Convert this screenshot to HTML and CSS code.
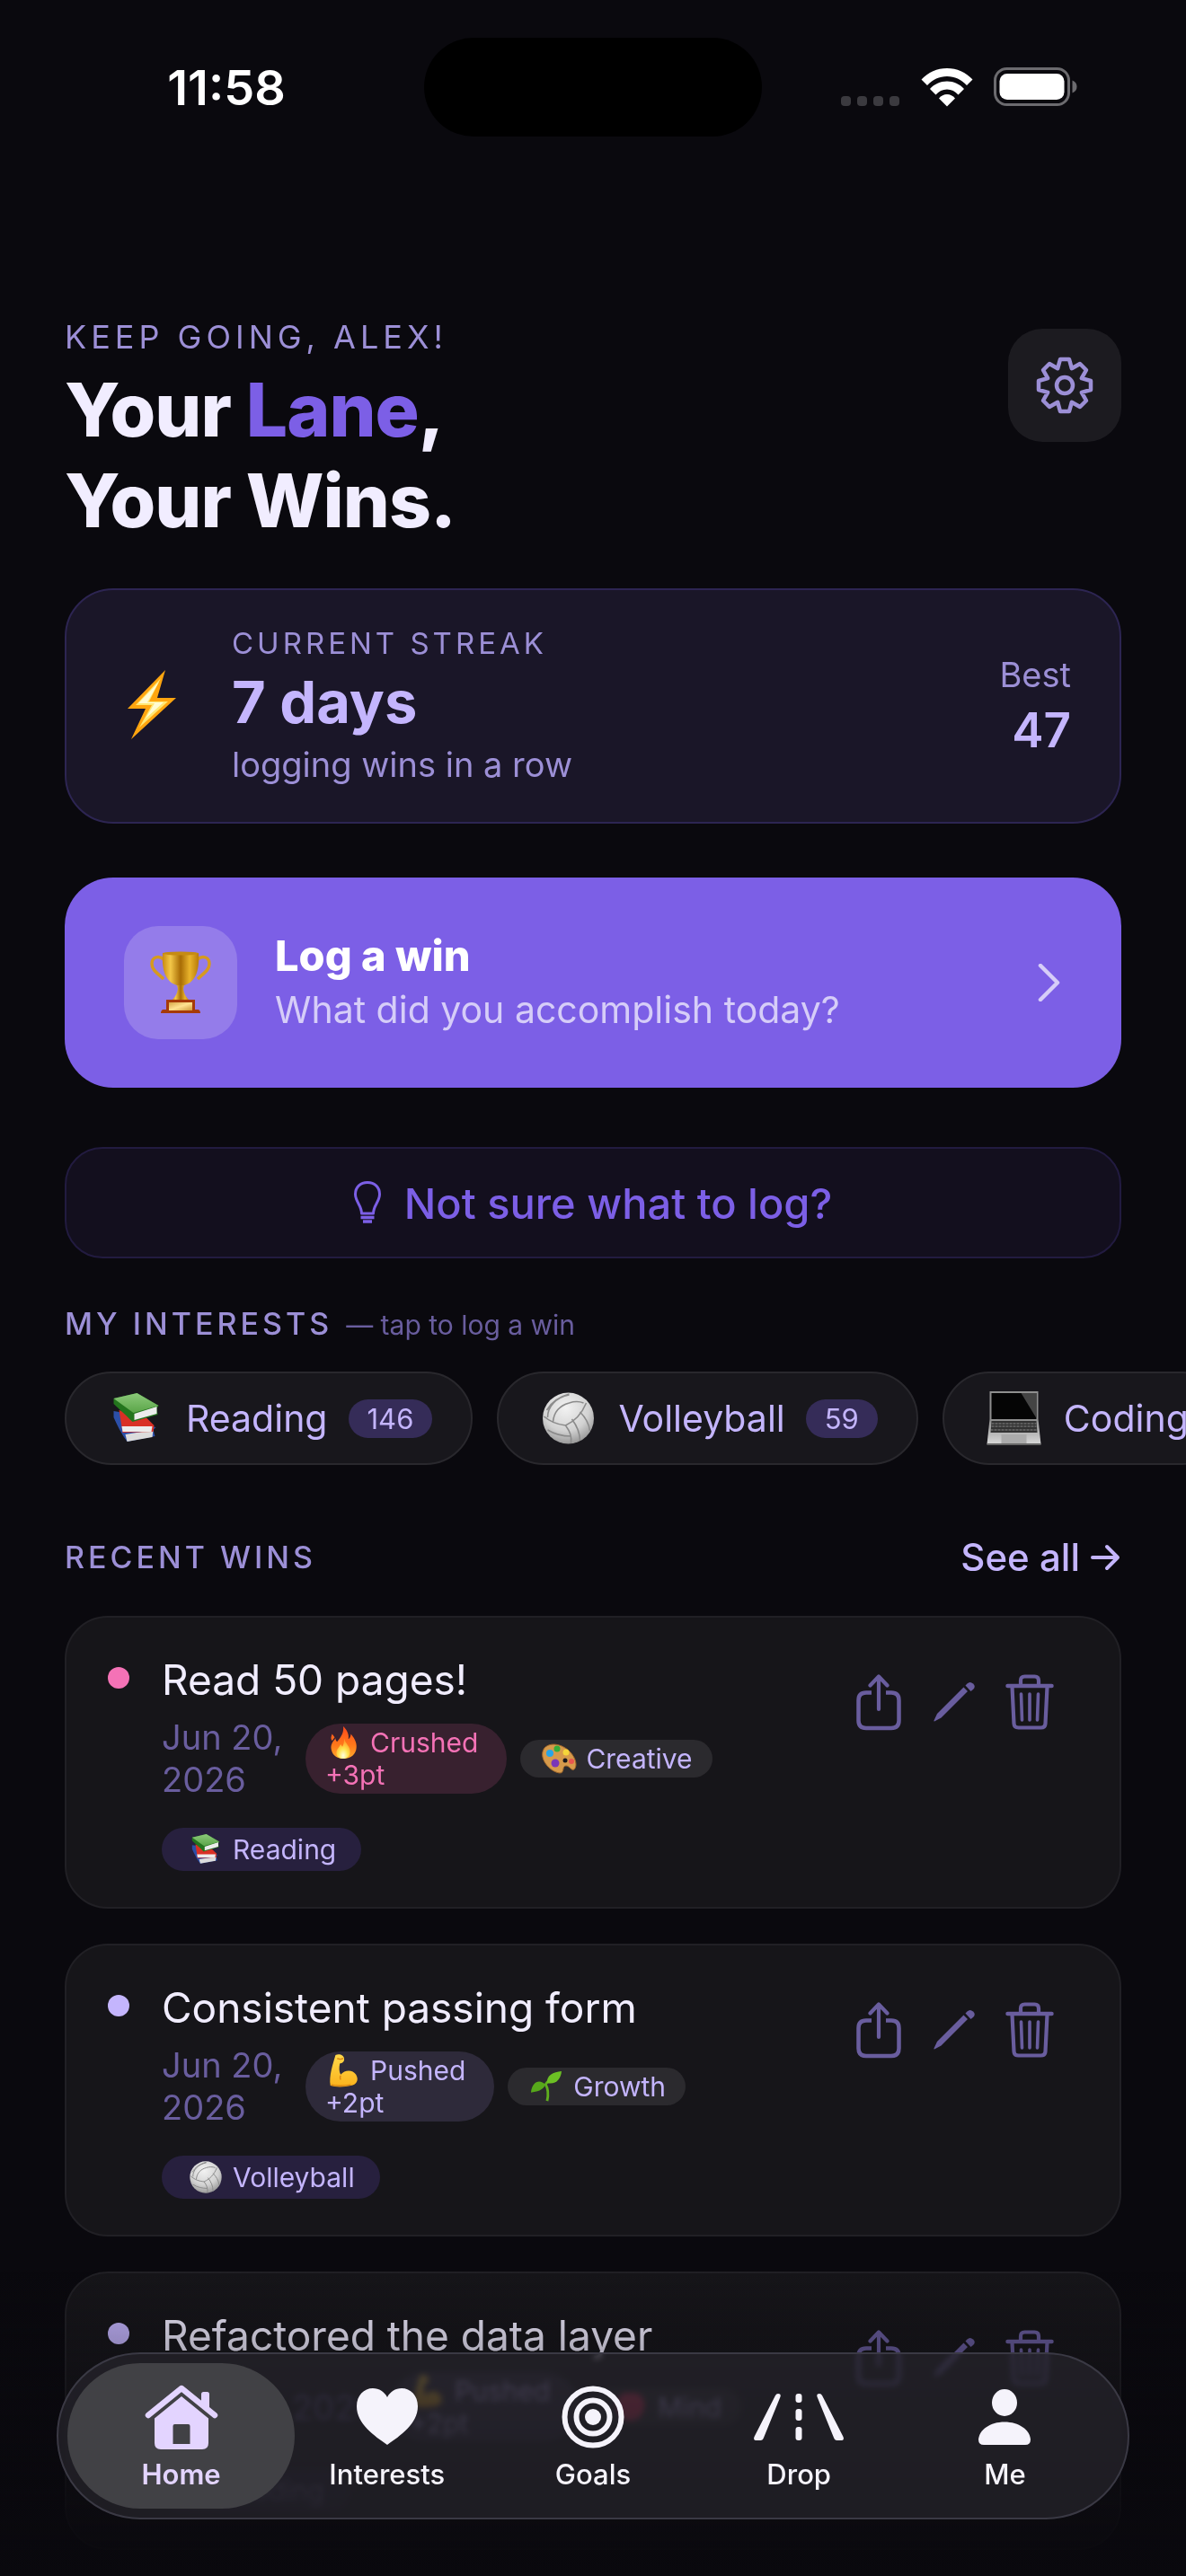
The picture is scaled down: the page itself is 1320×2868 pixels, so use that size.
FILE: index.html
```html
<!DOCTYPE html>
<html lang="en">
<head>
<meta charset="utf-8">
<meta name="viewport" content="width=device-width, initial-scale=1">
<title>Your Lane, Your Wins</title>
<link rel="stylesheet" href="styles.css">
</head>
<body>
<svg class="sprite" aria-hidden="true">
  <defs>
    <linearGradient id="g-gold" x1="0" x2="1" y1="0" y2="0"><stop offset="0" stop-color="#c98a10"/><stop offset=".22" stop-color="#f3c748"/><stop offset=".5" stop-color="#a86c05"/><stop offset=".75" stop-color="#e9b42c"/><stop offset="1" stop-color="#b97b08"/></linearGradient>
    <linearGradient id="g-plate" x1="0" x2="1" y1="0" y2="1"><stop offset="0" stop-color="#d6a648"/><stop offset=".5" stop-color="#ffe391"/><stop offset="1" stop-color="#cf9a3a"/></linearGradient>
    <radialGradient id="g-ball" cx=".45" cy=".3" r=".75"><stop offset="0" stop-color="#f2f2f2"/><stop offset=".6" stop-color="#d2d2d2"/><stop offset="1" stop-color="#8e8e8e"/></radialGradient>
    <linearGradient id="g-green" x1="0" x2="0" y1="0" y2="1"><stop offset="0" stop-color="#8cc97a"/><stop offset="1" stop-color="#5aa548"/></linearGradient>
    <linearGradient id="g-fire" x1="0" x2="0" y1="0" y2="1"><stop offset="0" stop-color="#ff4a1c"/><stop offset=".6" stop-color="#ff7a1a"/><stop offset="1" stop-color="#ffab2e"/></linearGradient>
    <radialGradient id="g-flame" cx=".5" cy=".85" r=".7"><stop offset="0" stop-color="#fffde0"/><stop offset=".5" stop-color="#ffe34d"/><stop offset="1" stop-color="#ff9d2b"/></radialGradient>
    <linearGradient id="g-arm" x1="0" x2="0" y1="0" y2="1"><stop offset="0" stop-color="#ffd94a"/><stop offset="1" stop-color="#fbb21c"/></linearGradient>
    <linearGradient id="g-base" x1="0" x2="0" y1="0" y2="1"><stop offset="0" stop-color="#8c8c8c"/><stop offset="1" stop-color="#d9d9d9"/></linearGradient>
  </defs>
  <symbol id="e-bolt" viewBox="0 0 54 78"><path d="M42 0 0 43h20L4 77 54 31H33Z" fill="#ffa50f"/><path d="M37 9 9 39h18L13 64 45 35H24Z" fill="#ffe873"/><path d="M35 13 12 37h18L20 54 40 36H22Z" fill="#fffbd2"/></symbol>
  <symbol id="e-trophy" viewBox="0 0 68 70"><path d="M15 9C9 4 2 7 2 14c0 7 6 10 13 17M53 9c6-5 13-2 13 5 0 7-6 10-13 17" fill="none" stroke="#d69a1e" stroke-width="3.5"/><path d="M14 2h40c1 17-2 32-16 36h-8C16 34 13 19 14 2Z" fill="url(#g-gold)"/><ellipse cx="34" cy="2.500" rx="20" ry="2" fill="#c68b12"/><path d="M30 38h8l-1 4c1 5 2 8 7 13H24c5-5 6-8 7-13Z" fill="url(#g-gold)"/><path d="M18 54h32v11h3c2 0 3 2 3 4H12c0-2 1-4 3-4h3Z" fill="#a63a08"/><path d="M21 57h26v9H21Z" fill="url(#g-plate)"/></symbol>
  <symbol id="e-books" viewBox="0 0 52 56"><path d="m1 20 6 1 10 10 31 7-3 3 2 7-31 6C10 46 4 34 1 27Z" fill="#2c4fa8"/><path d="m14 46 31-5-1 8-28 5Z" fill="#dcdcdc"/><path d="m7 19 30 8 9 9-1 7-34 1Z" fill="#d93025"/><path d="m10 37 34 0-1 6H11Z" fill="#ececec"/><path d="M1 6 27 0l24 14-2 3 1 7-28 8C13 23 3 14 1 12Z" fill="#23751d"/><path d="m24 23 25-8 0 8-25 7Z" fill="#ececec"/><path d="M1 6 27 0l24 14-28 8Z" fill="url(#g-green)"/></symbol>
  <symbol id="e-ball" viewBox="0 0 58 58"><circle cx="29" cy="29" r="28.500" fill="url(#g-ball)"/><path d="M2 27c8 7 15 9 24 10C37 32 44 24 49 12M5 20C10 11 19 5 30 2M6 28c0-12 9-22 24-25M12 33c1-11 7-18 18-21 6-2 11-2 16 0M26 37c5 7 7 12 6 20M33 30c6 8 9 15 9 24M42 22c6 6 10 13 11 21M6 42c8 5 16 7 26 7" fill="none" stroke="#8b8b8b" stroke-width="1.600"/></symbol>
  <symbol id="e-laptop" viewBox="0 0 60 62"><path d="M3 1h54v31H3Z" fill="#8f8f8f"/><path d="M5 3h50v29H5Z" fill="#050505"/><path d="M38 3h17v28Z" fill="#444"/><path d="M3 32h54l3 28H0Z" fill="url(#g-base)"/><path d="M5 34h50l1 13H4Z" fill="#333"/><path d="M5 37h50M5 40h50M4 44h52" stroke="#888" stroke-dasharray="3 1"/><path d="M16 49h28v10H16Z" fill="#ababab"/><path d="M0 59h60v2H0Z" fill="#666"/></symbol>
  <symbol id="e-fire" viewBox="0 0 38 40"><path d="M19 1c5 5 7 10 6 15 2-1 3-4 3-6 5 6 8 12 6 19-2 7-8 10-15 10S6 35 5 28C4 22 7 19 10 15c0 2 1 4 2 4 4-5 8-10 7-18ZM6 10l3 4-3 4c-2-3-1-5 0-8Z" fill="url(#g-fire)"/><path d="M20 15c1 6 8 10 7 17-1 5-4 7-8 7s-8-2-8-7c0-4 3-6 5-10l2 3c2-3 2-6 2-10Z" fill="url(#g-flame)"/></symbol>
  <symbol id="e-palette" viewBox="0 0 40 34"><path d="M4 5C11-2 24 1 32 9c7 7 9 16 5 20-3 2-5-4-9-4-5 0-1 8-7 8C10 32-4 16 4 5Z" fill="#d69a4b" stroke="#9c642a"/><circle cx="10" cy="11" r="4" fill="#27a5e8"/><circle cx="18" cy="6" r="3.500" fill="#35ad3a"/><circle cx="28" cy="10" r="3.500" fill="#f6d63a"/><circle cx="34" cy="20" r="3" fill="#e8564f"/><circle cx="16" cy="22" r="4.500" fill="#7a36b8"/><circle cx="27" cy="19" r="2.500" fill="#17161a"/></symbol>
  <symbol id="e-arm" viewBox="0 0 38 40"><path d="M10 2c4-2 10 0 10 4 1 4-3 6-5 6-1 5-1 9 1 13 5-6 14-6 18 0 4 7 0 12-6 13-8 2-18 2-24 0C2 27 7 12 10 2Z" fill="url(#g-arm)"/><path d="M12 6c3 1 4 2 7 0M16 26c-1 2-1 3 0 5M5 37c8 2 17 1 23 0" fill="none" stroke="#d98512" stroke-width="1.500"/></symbol>
  <symbol id="e-plant" viewBox="0 0 38 38"><path d="M20 36c2-9 1-15-2-20M18 17c2-4 5-6 9-8" fill="none" stroke="#5fae1e" stroke-width="3"/><path d="M20 15C19 6 27 2 37 1c-1 9-6 16-17 14Z" fill="#6cc024"/><path d="M18 17C11 9 2 14 1 26c7-1 14-2 17-9Z" fill="#57a81b"/></symbol>
  <symbol id="e-brain" viewBox="0 0 40 40"><path d="M20 3c9-2 17 4 17 14S30 37 20 37 3 28 3 17 11 1 20 3Z" fill="#f5305f"/></symbol>
  <symbol id="i-share" viewBox="0 0 50 63"><path d="M17 20.500H11q-8.500 0-8.500 8.500v22.500q0 8.500 8.500 8.500h28q8.500 0 8.500-8.500V29q0-8.500-8.500-8.500h-6" fill="none" stroke="currentColor" stroke-width="4.500"/><path d="M25 39V3M15.500 12.500 25 2.500l9.500 10" fill="none" stroke="currentColor" stroke-width="4.200" stroke-linecap="round" stroke-linejoin="round"/></symbol>
  <symbol id="i-pencil" viewBox="0 0 46 46"><path d="M33.500 6.500 38 11 8.500 40.500 1 44.500Q0 44.500.5 43.500L4 36Z" fill="currentColor"/><path d="m35.500 4.500 2-2q3-3 6.500 0t0 6.500l-2.500 2Z" fill="currentColor"/></symbol>
  <symbol id="i-trash" viewBox="0 0 54 62"><g fill="none" stroke="currentColor" stroke-linecap="round"><path d="M2.500 13h49" stroke-width="4.500"/><path d="M17 12V7q0-4.500 4.500-4.500h11Q37 2.500 37 7v5M7.500 14l2 41q.3 4.500 5 4.500h25q4.700 0 5-4.500l2-41" stroke-width="4.200"/><path d="m17.500 22 1 29M27 22v29M36.500 22l-1 29" stroke-width="3.600"/></g></symbol>
</svg>

<header class="status" aria-label="Status bar">
  <time class="status-time">11:58</time>
  <div class="island"></div>
  <div class="status-icons">
    <svg width="66" height="12" viewBox="0 0 66 12" fill="#3b3a3f"><rect width="11" height="11" rx="4"/><rect x="18" width="11" height="11" rx="4"/><rect x="36" width="11" height="11" rx="4"/><rect x="54" width="11" height="11" rx="4"/></svg>
    <svg class="wifi" width="58" height="43" viewBox="0 0 58 43" fill="#fff"><path d="M29 0c11 0 21 4.500 28.500 12.500L51 19C45 12.500 37.500 9 29 9S13 12.500 7 19L.5 12.500C8 4.500 18 0 29 0Z"/><path d="M29 14.500c7.500 0 14 3 19 8.500l-6.500 6.500c-3.500-4-7.500-6-12.500-6s-9 2-12.500 6L10 23c5-5.500 11.500-8.500 19-8.500Z"/><path d="M29 29c3.500 0 6.500 1.500 9 4.500l-9 9-9-9c2.500-3 5.500-4.500 9-4.500Z"/></svg>
    <svg width="93" height="44" viewBox="0 0 93 44"><rect x="1.500" y="1.500" width="82" height="40" rx="13" fill="none" stroke="#6c6b6f" stroke-width="3"/><rect x="6.500" y="7" width="72" height="29" rx="8.500" fill="#fff"/><path d="M87.500 14.500q5 2 5 7t-5 7Z" fill="#6c6b6f"/></svg>
  </div>
</header>

<main class="page">
  <section class="hero">
    <div>
      <p class="eyebrow">KEEP GOING, ALEX!</p>
      <h1 class="headline">Your <span class="accent">Lane</span>,<br>Your Wins.</h1>
    </div>
    <button class="gear" aria-label="Settings">
      <svg width="64" height="64" viewBox="-32 -32 64 64" fill="none" stroke="currentColor" stroke-width="4.500" stroke-linejoin="round"><path d="M-5-29H5L7.800-18.800 17-24 24-17 18.800-7.800 29-5V5L18.800 7.800 24 17 17 24 7.800 18.800 5 29H-5L-7.800 18.800-17 24-24 17-18.800 7.800-29 5V-5L-18.800-7.800-24-17-17-24-7.800-18.800Z"/><circle r="9"/></svg>
    </button>
  </section>

  <section class="streak">
    <svg class="bolt" width="54" height="78"><use href="#e-bolt"/></svg>
    <div class="streak-main">
      <p class="label">CURRENT STREAK</p>
      <p class="streak-days">7 days</p>
      <p class="streak-note">logging wins in a row</p>
    </div>
    <div class="best">
      <p class="streak-note">Best</p>
      <p class="best-value">47</p>
    </div>
  </section>

  <button class="log">
    <span class="log-icon"><svg width="68" height="70"><use href="#e-trophy"/></svg></span>
    <span class="log-text"><strong>Log a win</strong><span>What did you accomplish today?</span></span>
    <svg width="30" height="42" viewBox="0 0 30 42" fill="none" stroke="#d6cdf8" stroke-width="4.500" stroke-linecap="round" stroke-linejoin="round"><path d="m6 2 19 19L6 40"/></svg>
  </button>

  <button class="hint">
    <svg width="30" height="48" viewBox="0 0 30 48" fill="none" stroke="currentColor" stroke-width="3"><path d="M8.500 36C8.500 27 1.500 23 1.500 14.500 1.500 7 7 1.500 15 1.500S28.500 7 28.500 14.500C28.500 23 21.500 27 21.500 36Z" stroke-linejoin="round"/><path d="M7.500 40.500h15M10 45h10" stroke-width="3.500"/></svg>
    Not sure what to log?
  </button>

  <section class="interests">
    <h2 class="label">MY INTERESTS <small>— tap to log a win</small></h2>
    <div class="interest-row">
      <button class="interest"><svg width="69" height="56"><use href="#e-books"/></svg>Reading<span class="count">146</span></button>
      <button class="interest"><svg width="69" height="58"><use href="#e-ball"/></svg>Volleyball<span class="count">59</span></button>
      <button class="interest"><svg width="69" height="62"><use href="#e-laptop"/></svg>Coding</button>
    </div>
  </section>

  <section>
    <div class="recent-head">
      <h2 class="label">RECENT WINS</h2>
      <a class="see-all" href="#wins">See all
        <svg width="34" height="30" viewBox="0 0 34 30" fill="none" stroke="currentColor" stroke-width="4" stroke-linecap="round" stroke-linejoin="round"><path d="M2 15h27M18 3l12 12-12 12"/></svg></a>
    </div>
    <div class="wins" id="wins">
      <article class="win">
        <i class="dot dot-pink"></i>
        <div class="win-body">
          <h3>Read 50 pages!</h3>
          <div class="meta">
            <time class="date">Jun 20,<br>2026</time>
            <span class="effort effort-pink"><span class="effort-line"><svg width="40" height="38"><use href="#e-fire"/></svg>Crushed</span>+3pt</span>
            <span class="tag"><svg width="42" height="34"><use href="#e-palette"/></svg>Creative</span>
          </div>
          <span class="tag tag-interest"><svg width="42" height="34"><use href="#e-books"/></svg>Reading</span>
        </div>
        <div class="actions">
          <button aria-label="Share"><svg width="50" height="63"><use href="#i-share"/></svg></button>
          <button aria-label="Edit"><svg width="46" height="46"><use href="#i-pencil"/></svg></button>
          <button aria-label="Delete"><svg width="54" height="62"><use href="#i-trash"/></svg></button>
        </div>
      </article>
      <article class="win">
        <i class="dot"></i>
        <div class="win-body">
          <h3>Consistent passing form</h3>
          <div class="meta">
            <time class="date">Jun 20,<br>2026</time>
            <span class="effort"><span class="effort-line"><svg width="40" height="38"><use href="#e-arm"/></svg>Pushed</span>+2pt</span>
            <span class="tag"><svg width="42" height="36"><use href="#e-plant"/></svg>Growth</span>
          </div>
          <span class="tag tag-interest"><svg width="42" height="36"><use href="#e-ball"/></svg>Volleyball</span>
        </div>
        <div class="actions">
          <button aria-label="Share"><svg width="50" height="63"><use href="#i-share"/></svg></button>
          <button aria-label="Edit"><svg width="46" height="46"><use href="#i-pencil"/></svg></button>
          <button aria-label="Delete"><svg width="54" height="62"><use href="#i-trash"/></svg></button>
        </div>
      </article>
      <article class="win">
        <i class="dot"></i>
        <div class="win-body">
          <h3>Refactored the data layer</h3>
          <div class="meta">
            <time class="date">Jun 20, 2026</time>
            <span class="effort"><span class="effort-line"><svg width="40" height="38"><use href="#e-arm"/></svg>Pushed</span>+2pt</span>
            <span class="tag"><svg width="42" height="36"><use href="#e-brain"/></svg>Mind</span>
          </div>
          <span class="tag tag-interest"><svg width="42" height="36"><use href="#e-laptop"/></svg>Coding</span>
        </div>
        <div class="actions">
          <button aria-label="Share"><svg width="50" height="63"><use href="#i-share"/></svg></button>
          <button aria-label="Edit"><svg width="46" height="46"><use href="#i-pencil"/></svg></button>
          <button aria-label="Delete"><svg width="54" height="62"><use href="#i-trash"/></svg></button>
        </div>
      </article>
    </div>
  </section>
</main>

<div class="fade"></div>
<nav class="tabs" aria-label="Main">
  <a class="tab tab-active" href="#home"><svg width="82" height="72" viewBox="0 0 82 72" fill="currentColor"><path d="M4 34 41 4l37 30" fill="none" stroke="currentColor" stroke-width="6.500" stroke-linecap="round" stroke-linejoin="round"/><path d="M63 22V10.500q0-2.500 2.500-2.500h4q2.500 0 2.500 2.500V28Z"/><path fill-rule="evenodd" d="M41 13 71 37.500V65q0 7-7 7H18q-7 0-7-7V37.500ZM33.500 44q-2 0-2 2v20h19V46q0-2-2-2Z"/></svg>Home</a>
  <a class="tab" href="#interests"><svg width="68" height="64" viewBox="0 0 68 64" fill="currentColor"><path d="M34 63C20 53 0 40 0 20 0 8 8 0 18 0c7 0 13 4 16 10C37 4 43 0 50 0c10 0 18 8 18 20 0 20-20 33-34 43Z"/></svg>Interests</a>
  <a class="tab" href="#goals"><svg width="70" height="70" viewBox="-35 -35 70 70" fill="none" stroke="currentColor" stroke-width="6"><circle r="31.500"/><circle r="18.500"/><circle r="9" fill="currentColor" stroke="none"/></svg>Goals</a>
  <a class="tab" href="#drop"><svg width="100" height="52" viewBox="0 0 100 52" fill="currentColor"><path d="M24 2q1-2 3-2 3.500 0 2.500 3.500L11 49q-1 3-3.500 3H3q-4 0-2.500-4ZM76 2q-1-2-3-2-3.500 0-2.500 3.500L89 49q1 3 3.500 3H97q4 0 2.500-4Z"/><rect x="46.500" width="7" height="10" rx="3"/><rect x="46.500" y="17" width="7" height="13" rx="3"/><rect x="46.500" y="37" width="7" height="15" rx="3"/></svg>Drop</a>
  <a class="tab" href="#me"><svg width="58" height="62" viewBox="0 0 58 62" fill="currentColor"><ellipse cx="29" cy="15" rx="14" ry="15"/><path d="M6 62q-6 0-6-6C1 45 13 36.500 29 36.500S57 45 58 56q0 6-6 6Z"/></svg>Me</a>
</nav>
</body>
</html>
```
FILE: styles.css
```css
:root {
  --bg: #0a090e;
  --text: #f1edff;
  --lilac: #c4b5fd;
  --muted: #9c8fd6;
  --dim: #695d9e;
  --accent: #7c5fe6;
}

* { box-sizing: border-box; }

body {
  margin: 0;
  background: var(--bg);
  color: var(--text);
  font-family: Inter, "Liberation Sans", sans-serif;
  overflow-x: hidden;
}

h1, h2, h3, p { margin: 0; font-weight: 400; }
button { margin: 0; padding: 0; border: 0; background: none; color: inherit; font: inherit; text-align: left; }
a { color: inherit; text-decoration: none; }
svg { display: block; flex: none; }
.sprite { position: absolute; width: 0; height: 0; }

/* Status bar */
.status {
  display: grid;
  grid-template-columns: 1fr 376px 1fr;
  align-items: center;
  padding-top: 42px;
}
.status-time { padding-left: 32px; text-align: center; color: #fff; font-size: 54px; font-weight: 600; }
.island { height: 110px; border-radius: 55px; background: #000; }
.status-icons { display: flex; justify-content: flex-end; align-items: flex-end; gap: 23px; padding-right: 121px; }

.page { padding: 201px 72px 29px; }

.label { color: var(--muted); font-size: 33px; line-height: 42px; letter-spacing: 4px; }
h2.label { font-size: 34px; font-weight: 500; }

/* Greeting */
.hero { display: flex; justify-content: space-between; align-items: flex-start; }
.eyebrow { color: var(--muted); font-size: 36px; line-height: 44px; letter-spacing: 5px; }
.headline { margin-top: 9px; font-size: 82px; line-height: 101px; font-weight: 800; letter-spacing: -1px; }
.accent { color: var(--accent); }
.gear {
  display: grid;
  place-items: center;
  width: 126px;
  height: 126px;
  margin-top: 13px;
  border-radius: 38px;
  background: #1c1b20;
  color: var(--muted);
}

/* Streak */
.streak {
  display: flex;
  align-items: center;
  margin-top: 47px;
  padding: 38px 54px 40px 68px;
  border: 2px solid #2d2552;
  border-radius: 54px;
  background: #1a1628;
}
.streak-main { flex: 1; margin-left: 62px; }
.streak-days { margin: 6px 0; color: var(--lilac); font-size: 65px; line-height: 78px; font-weight: 700; }
.streak-note { color: var(--muted); font-size: 38px; line-height: 48px; }
.best { text-align: right; }
.best-value { margin-top: 8px; color: var(--lilac); font-size: 53px; line-height: 60px; font-weight: 600; }

/* Log a win */
.log {
  display: flex;
  align-items: center;
  gap: 42px;
  width: 100%;
  margin-top: 60px;
  padding: 54px 66px;
  border-radius: 54px;
  background: var(--accent);
}
.log-icon { display: grid; place-items: center; width: 126px; height: 126px; border-radius: 38px; background: #947cea; }
.log-text { display: flex; flex: 1; flex-direction: column; color: #d6cdf8; font-size: 41px; line-height: 60px; }
.log-text strong { color: #fff; font-size: 47px; font-weight: 800; }

.hint {
  display: flex;
  justify-content: center;
  align-items: center;
  gap: 26px;
  width: 100%;
  height: 124px;
  margin-top: 66px;
  border: 2px solid #221b40;
  border-radius: 42px;
  background: #130f1e;
  color: var(--accent);
  font-size: 47px;
  font-weight: 500;
}

/* Interests */
.interests { margin-top: 52px; }
.label small { margin-left: 2px; color: var(--dim); font-size: 30px; font-weight: 400; letter-spacing: 0; }
.interest-row { display: flex; gap: 27px; margin: 31px -72px 0 0; overflow: hidden; }
.interest {
  display: flex;
  flex: none;
  align-items: center;
  height: 104px;
  padding: 0 43px;
  border: 2px solid #29282d;
  border-radius: 52px;
  background: #18171c;
  color: var(--lilac);
  font-size: 41px;
}
.interest svg { margin-right: 21px; }
.count { margin-left: 23px; padding: 0 21px; border-radius: 22px; background: #352c58; font-size: 31px; line-height: 43px; }

/* Recent wins */
.recent-head { display: flex; justify-content: space-between; align-items: center; margin-top: 76px; }
.see-all { display: flex; align-items: center; gap: 12px; color: var(--lilac); font-size: 42px; line-height: 54px; font-weight: 500; }
.wins { display: grid; gap: 39px; margin-top: 38px; }
.win {
  display: flex;
  align-items: flex-start;
  padding: 40px 58px 40px 46px;
  border: 2px solid #212025;
  border-radius: 48px;
  background: #161519;
}
.dot { flex: none; width: 24px; height: 24px; margin: 15px 36px 0 0; border-radius: 50%; background: var(--lilac); }
.dot-pink { background: #f472b6; }
.win-body { flex: 1; }
.win h3 { font-size: 46px; line-height: 58px; }
.meta { display: flex; align-items: center; gap: 15px; margin: 12px 0 30px; }
.date { min-width: 145px; color: var(--dim); font-size: 38px; line-height: 47px; white-space: nowrap; }
.effort { padding: 3px 32px 3px 22px; border-radius: 39px; background: #2e2a3a; color: var(--lilac); font-size: 30px; line-height: 36px; }
.effort-pink { background: #38212f; color: #f472b6; }
.effort-line { display: flex; align-items: center; gap: 10px; height: 36px; }
.tag { display: inline-flex; align-items: center; gap: 9px; padding: 3px 22px; border-radius: 24px; background: #2b2a2e; color: var(--lilac); font-size: 30px; line-height: 36px; }
.tag-interest { display: flex; width: fit-content; padding: 6px 28px; background: #27203e; }
.actions { display: flex; margin-top: 12px; color: var(--dim); }
.actions button { display: grid; place-items: center; width: 84px; height: 84px; }

/* Tab bar floats over the list, which dims towards the screen edge */
.fade { position: fixed; inset: auto 0 0; height: 340px; background: linear-gradient(rgba(10, 9, 14, 0), rgba(10, 9, 14, .8) 75%, var(--bg)); pointer-events: none; }
.tabs {
  position: fixed;
  inset: auto 63px 63px;
  display: grid;
  grid-template-columns: repeat(5, 1fr);
  height: 186px;
  padding: 10px 22px;
  border: 2px solid #3a3944;
  border-radius: 93px;
  background: rgba(34, 33, 39, .8);
  backdrop-filter: blur(3px) brightness(1.5);
}
.tab {
  display: grid;
  grid-template-rows: 88px 38px;
  justify-items: center;
  align-items: center;
  padding-top: 16px;
  align-content: start;
  color: #f5f3fb;
  font-size: 31px;
  font-weight: 500;
}
.tab-active { margin: 0 -12px; border-radius: 81px; background: #414145; color: #e3d4ff; font-weight: 600; }
```
